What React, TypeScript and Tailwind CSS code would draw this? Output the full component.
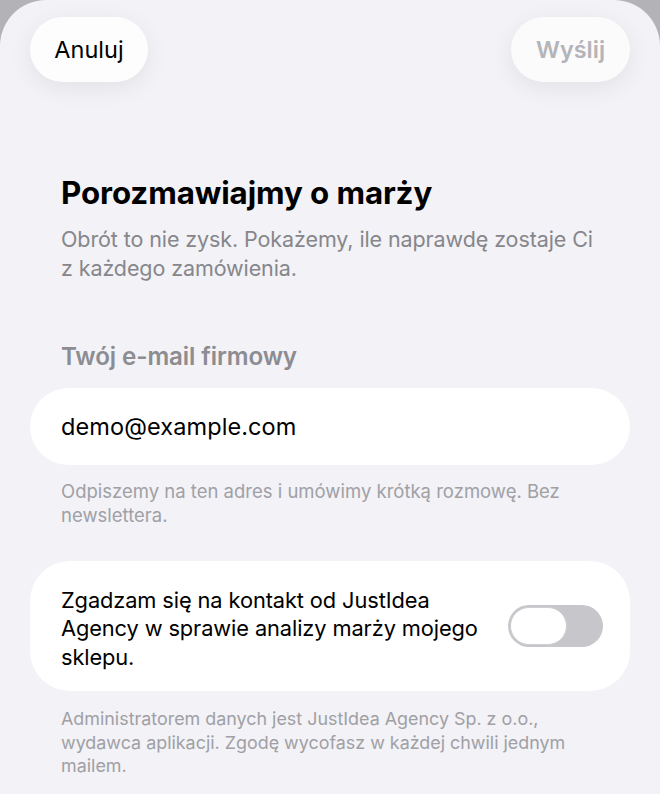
import React, { useState } from "react";

export default function App() {
  const [on, setOn] = useState(false);
  const font = { fontFamily: 'Inter, "Noto Sans", sans-serif' };
  return (
    <div className="min-h-[794px] w-[660px] bg-[#b3b3b7]" style={font}>
      <div className="min-h-[794px] w-full rounded-t-[46px] bg-[#f2f2f7] px-[30px] pt-[17px] pb-[20px]">
        <div className="flex items-center justify-between">
          <button className="h-[65px] w-[118px] rounded-full bg-[#fdfdfe] text-[23.5px] text-black shadow-[0_6px_24px_rgba(0,0,0,0.07)]">
            Anuluj
          </button>
          <button className="h-[65px] w-[119px] rounded-full bg-[#fbfbfc] text-[23.5px] font-semibold text-[#b4b4b9] shadow-[0_6px_24px_rgba(0,0,0,0.07)]">
            Wyślij
          </button>
        </div>

        <div className="px-[31px] pt-[92px]">
          <h1 className="whitespace-nowrap text-[31.3px] font-bold leading-[38px] tracking-[-0.1px] text-black">
            Porozmawiajmy o marży
          </h1>
          <p className="mt-[13px] whitespace-nowrap text-[21.5px] leading-[28.5px] tracking-[-0.1px] text-[#86868b]">
            Obrót to nie zysk. Pokażemy, ile naprawdę zostaje Ci
            <br />z każdego zamówienia.
          </p>
          <div className="mt-[60px] whitespace-nowrap text-[24.2px] font-semibold leading-[30px] tracking-[-0.1px] text-[#8c8c91]">
            Twój e-mail firmowy
          </div>
        </div>

        <div className="mt-[16px] flex h-[77px] items-center rounded-full bg-white px-[31px]">
          <span className="text-[23.5px] tracking-[0.1px] text-black">demo@example.com</span>
        </div>
        <p className="mt-[14px] whitespace-nowrap px-[31px] text-[18.5px] leading-[24px] text-[#a0a0a5]">
          Odpiszemy na ten adres i umówimy krótką rozmowę. Bez
          <br />
          newslettera.
        </p>

        <div className="mt-[34px] flex h-[130px] items-center justify-between rounded-[40px] bg-white pl-[31px] pr-[27px] pt-[5px]">
          <p className="whitespace-nowrap text-[21.8px] leading-[28.5px] tracking-[-0.1px] text-black">
            Zgadzam się na kontakt od JustIdea
            <br />
            Agency w sprawie analizy marży mojego
            <br />
            sklepu.
          </p>
          <button
            onClick={() => setOn(!on)}
            className="relative mb-[5px] h-[42px] w-[95px] shrink-0 rounded-full bg-[#c7c7cb]"
          >
            <span className="absolute left-[2px] top-[2px] h-[38px] w-[57px] rounded-full border border-[#cfcfd3] bg-white" />
          </button>
        </div>
        <p className="mt-[16px] whitespace-nowrap px-[31px] text-[17.9px] leading-[23.5px] text-[#a0a0a5]">
          Administratorem danych jest JustIdea Agency Sp. z o.o.,
          <br />
          wydawca aplikacji. Zgodę wycofasz w każdej chwili jednym
          <br />
          mailem.
        </p>
      </div>
    </div>
  );
}
